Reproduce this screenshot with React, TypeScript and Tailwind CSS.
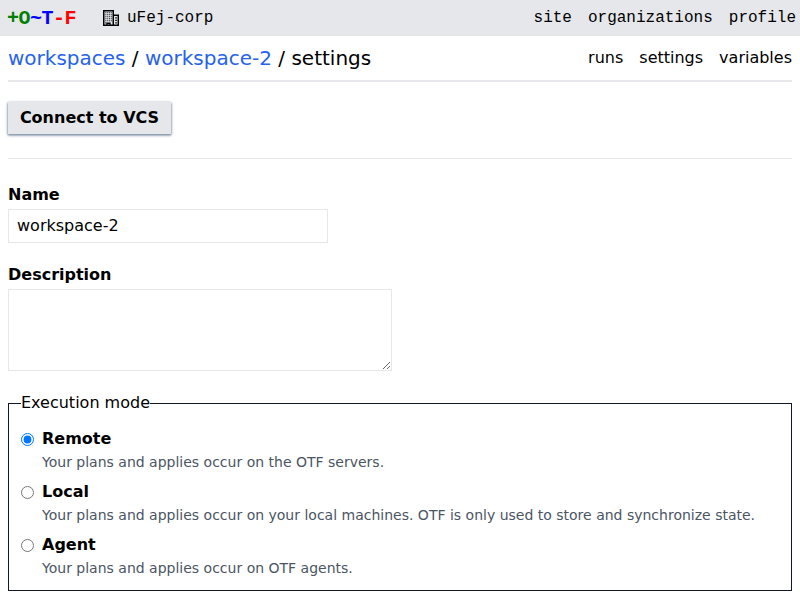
import React from "react";

function BuildingIcon() {
  return (
    <svg width="16" height="16" viewBox="0 0 16 16" fill="none" aria-hidden="true">
      <path d="M.75 15.3V.75h9.5V15.3M10.5 5.25h4.8V15.3" stroke="#000" strokeWidth="1.5" />
      <path d="M0 15.3h16M4 16v-2.8h3V16" stroke="#000" strokeWidth="1.4" />
      <path
        d="M2.3 2.8h6.6M2.3 4.8h6.6M2.3 6.8h6.6M2.3 8.8h6.6M2.3 10.8h6.6"
        stroke="#222"
        strokeWidth="1.1"
        strokeDasharray="1.1 .72"
      />
      <path d="M2.3 12.8h1M12.2 7.8h1.7M12.2 10.3h1.7M12.2 12.8h1.7" stroke="#111" strokeWidth="1.3" />
    </svg>
  );
}

const modes = [
  { name: "Remote", text: "Your plans and applies occur on the OTF servers." },
  {
    name: "Local",
    text: "Your plans and applies occur on your local machines. OTF is only used to store and synchronize state.",
  },
  { name: "Agent", text: "Your plans and applies occur on OTF agents." },
];

export default function App() {
  return (
    <div className="h-[600px] overflow-hidden bg-white font-['DejaVu_Sans',sans-serif] text-base text-black">
      <header className="flex h-9 items-center justify-between bg-gray-200 pr-1 pl-[7px] font-['Liberation_Mono',monospace]">
        <div className="flex items-center">
          <a className="w-[96px] pt-0.5 text-xl font-bold tracking-tight">
            <span className="text-[#008000]">+O</span>
            <span className="text-[#0000ff]">~T</span>
            <span className="text-[#ff0000]">-F</span>
          </a>
          <div className="flex items-center gap-2">
            <BuildingIcon />
            <a>uFej-corp</a>
          </div>
        </div>
        <nav className="flex gap-4">
          <a>site</a>
          <a>organizations</a>
          <a>profile</a>
        </nav>
      </header>
      <main className="px-2">
        <div className="flex h-[46px] items-center justify-between border-b-2 border-gray-200">
          <div className="text-xl">
            <a className="text-[#2563eb]">workspaces</a> / <a className="text-[#2563eb]">workspace-2</a> / settings
          </div>
          <nav className="flex gap-4">
            <a>runs</a>
            <a>settings</a>
            <a>variables</a>
          </nav>
        </div>
        <button className="mt-5 block h-8 w-[163px] bg-gray-200 font-bold shadow-[0_1px_3px_#94a3b8,0_1px_2px_#64748b]">
          Connect to VCS
        </button>
        <hr className="mt-6 border-gray-200" />
        <form className="mt-6 flex flex-col">
          <label className="font-bold" htmlFor="name">
            Name
          </label>
          <input
            id="name"
            className="mt-[2px] h-[34px] w-80 border border-gray-200 px-2 pb-0.5 outline-none"
            defaultValue="workspace-2"
          />
          <label className="mt-5 font-bold" htmlFor="description">
            Description
          </label>
          <textarea id="description" className="mt-[2px] h-[82px] w-96 resize border border-gray-200 p-2 outline-none" />
          <fieldset className="mt-5 h-[200px] border border-[#111827] px-3">
            <legend>Execution mode</legend>
            <div className="flex flex-col gap-[5px] pt-3">
              {modes.map((mode, index) => (
                <div key={mode.name} className="grid h-12 grid-cols-[13px_1fr] grid-rows-[24px_22px] gap-x-2">
                  <input
                    type="radio"
                    name="mode"
                    id={mode.name}
                    defaultChecked={index === 0}
                    className="mt-[6px] h-[13px] w-[13px]"
                  />
                  <label className="font-bold" htmlFor={mode.name}>
                    {mode.name}
                  </label>
                  <span className="col-start-2 text-sm leading-[22px] text-[#4b5563]">{mode.text}</span>
                </div>
              ))}
            </div>
          </fieldset>
        </form>
      </main>
    </div>
  );
}
